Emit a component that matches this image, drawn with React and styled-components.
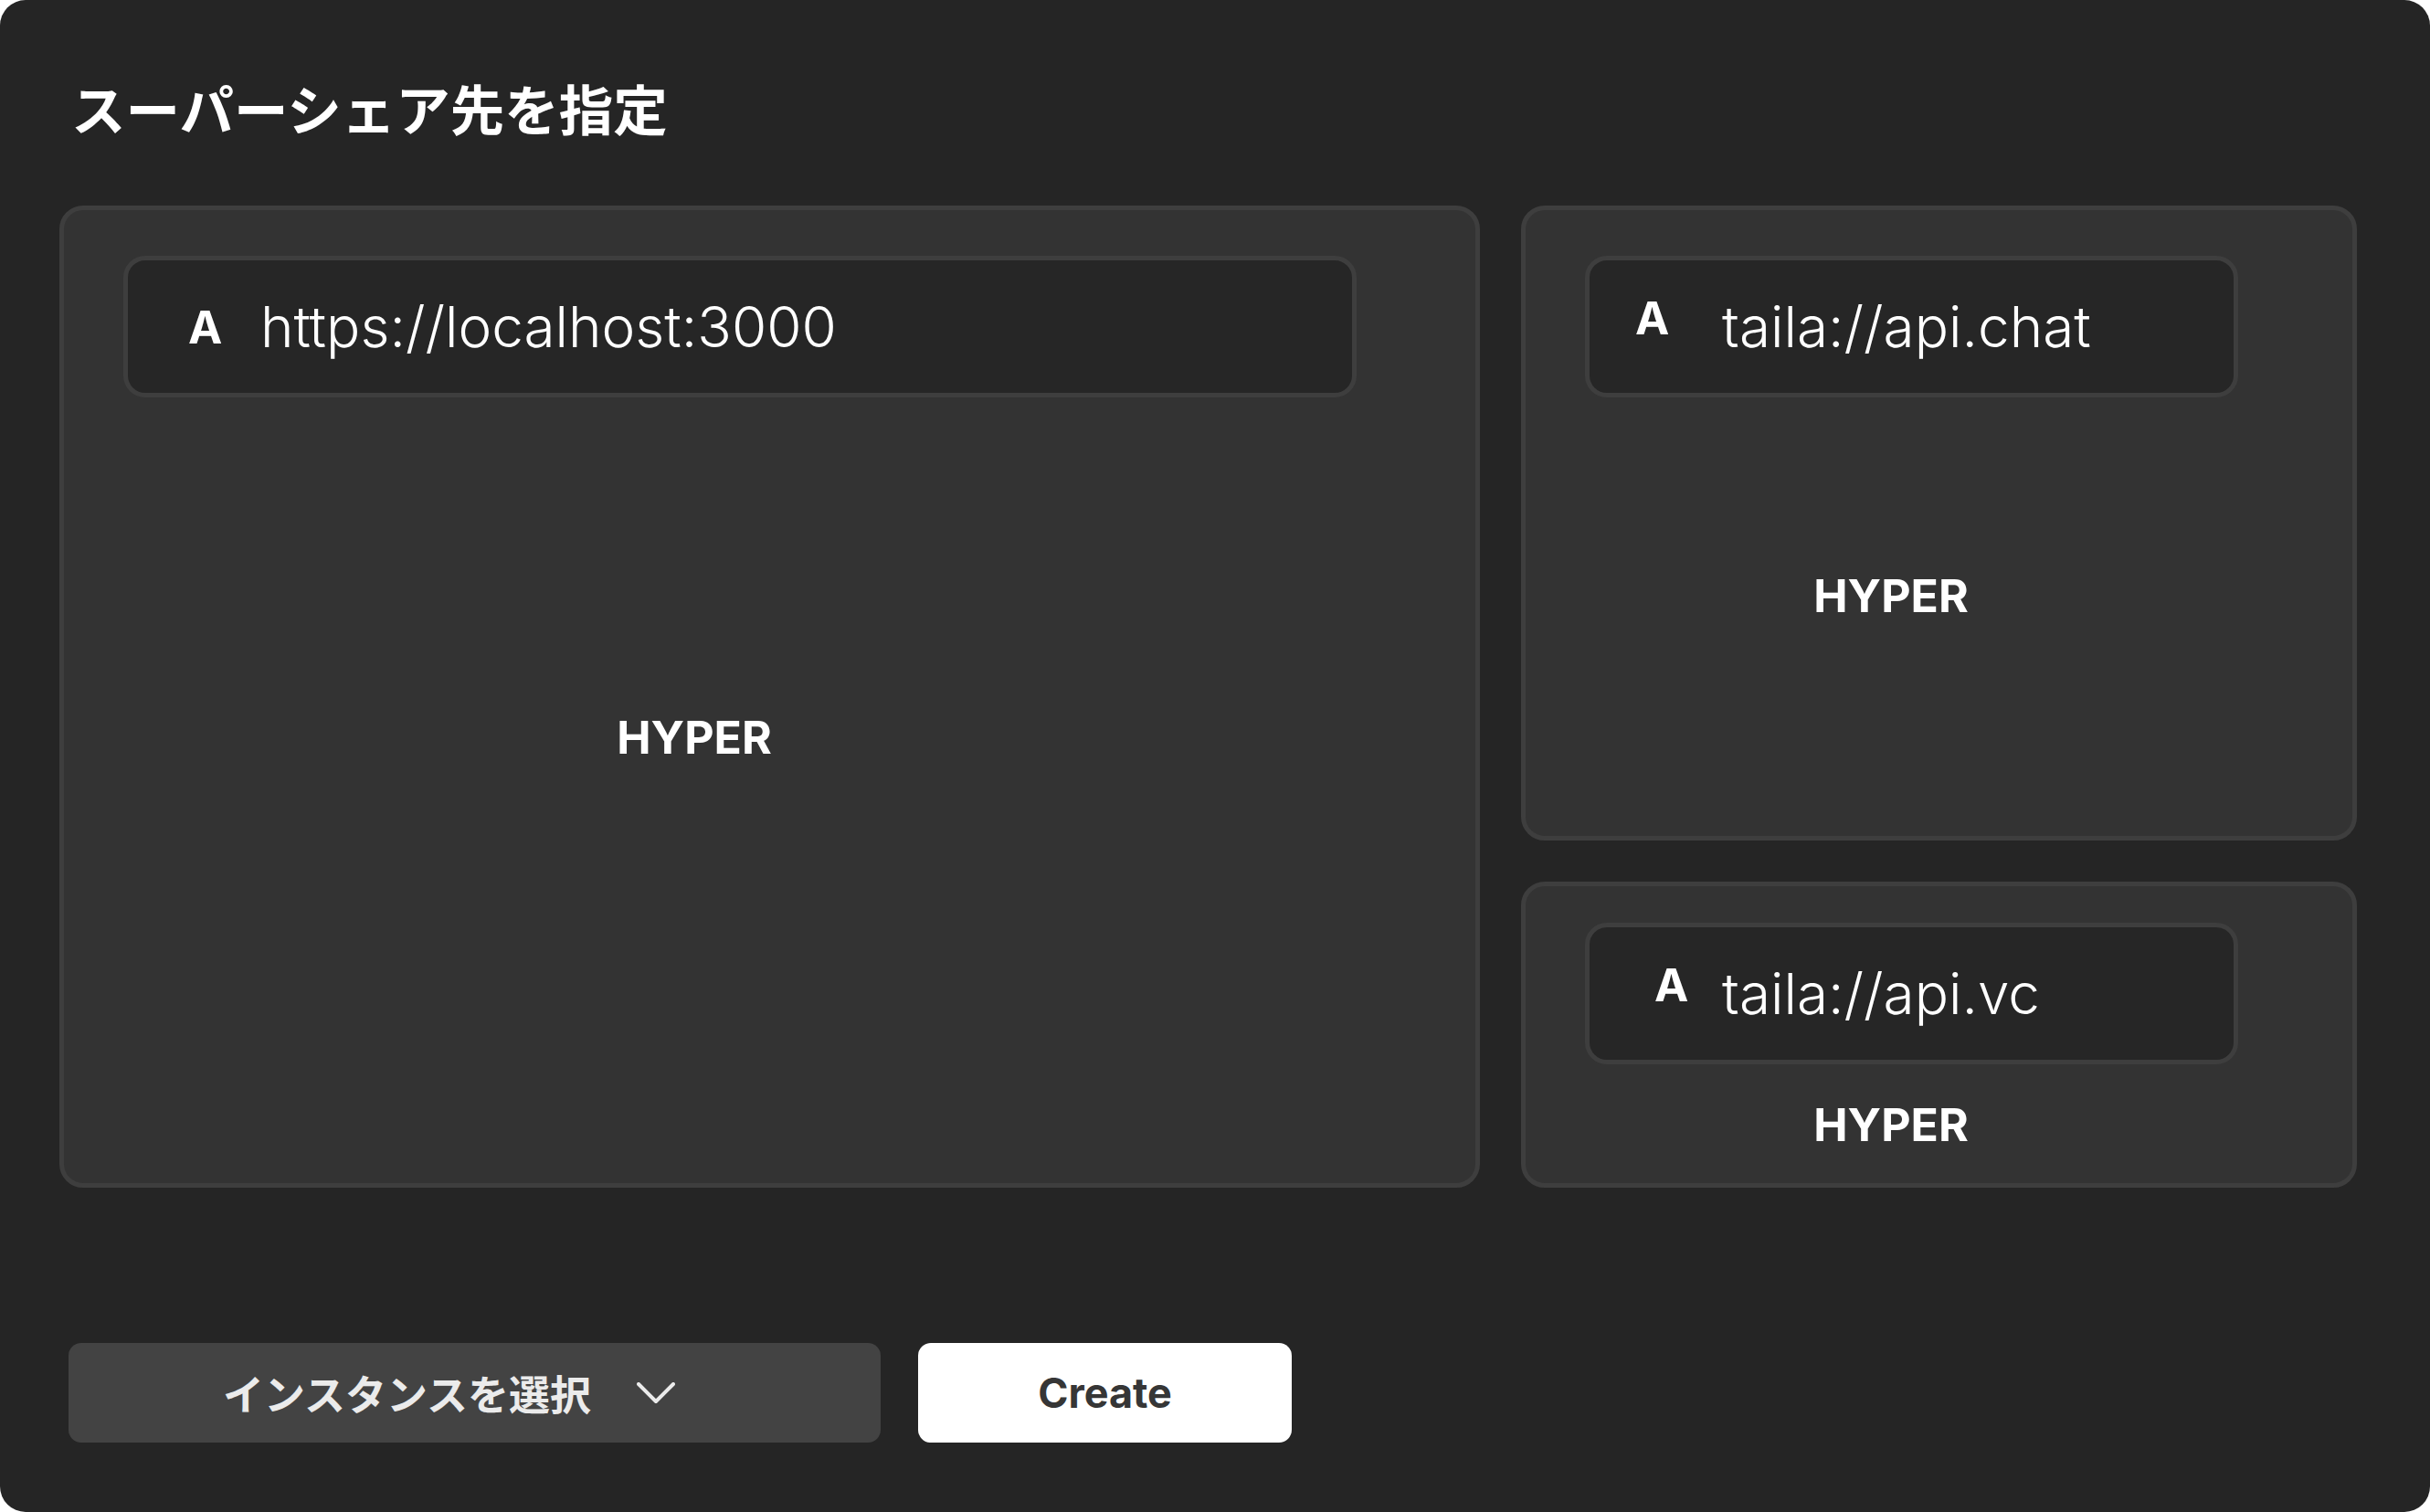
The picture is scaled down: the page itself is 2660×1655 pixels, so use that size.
import React from 'react';
import styled, { createGlobalStyle } from 'styled-components';

const GlobalStyle = createGlobalStyle`
  html, body {
    margin: 0;
    padding: 0;
    background: #ffffff;
  }
  * {
    box-sizing: border-box;
  }
`;

const LATIN = `Inter, "Noto Sans", sans-serif`;
const CJK = `"Noto Sans CJK JP", "Noto Sans", sans-serif`;

const Panel = styled.div`
  width: 2660px;
  height: 1655px;
  background: #252525;
  border-radius: 28px;
  padding: 82px 80px 0 65px;
  display: flex;
  flex-direction: column;
`;

const Title = styled.h1`
  margin: 0 0 73px 13px;
  font-family: ${CJK};
  font-size: 59.5px;
  line-height: 70px;
  font-weight: 700;
  color: #ffffff;
`;

const Board = styled.div`
  display: grid;
  grid-template-columns: 1555px 915px;
  column-gap: 45px;
  height: 1075px;
`;

const Column = styled.div`
  display: grid;
  grid-template-rows: 695px 1fr;
  row-gap: 45px;
`;

const Card = styled.div`
  background: #333333;
  border: 5px solid #3e3e3e;
  border-radius: 26px;
  padding: 50px ${({ $right }) => $right}px 0 65px;
  display: flex;
  flex-direction: column;
  ${({ $tight }) => $tight && 'padding-top: 40px;'}
`;

const UrlField = styled.div`
  height: 155px;
  background: #262626;
  border: 5px solid #3e3e3e;
  border-radius: 24px;
  display: flex;
  align-items: center;
`;

const Badge = styled.span`
  width: 145px;
  flex: none;
  padding-left: ${({ $left }) => $left}px;
  margin-bottom: ${({ $lift }) => $lift * 2}px;
  font-family: ${LATIN};
  font-size: 50px;
  line-height: 1;
  font-weight: 700;
  color: #ffffff;
`;

const Url = styled.span`
  font-family: ${LATIN};
  font-size: 62px;
  line-height: 1;
  font-weight: 300;
  color: #ffffff;
  white-space: nowrap;
`;

const Label = styled.div`
  margin-top: ${({ $top }) => $top}px;
  padding-right: ${({ $shift }) => $shift}px;
  text-align: center;
  font-family: ${LATIN};
  font-size: 50px;
  line-height: 60px;
  font-weight: 700;
  color: #ffffff;
`;

const Actions = styled.div`
  display: flex;
  gap: 41px;
  margin-top: 170px;
  padding-left: 10px;
`;

const SelectButton = styled.button`
  width: 889px;
  height: 109px;
  border: none;
  border-radius: 14px;
  background: #434343;
  color: #ebebeb;
  display: flex;
  align-items: center;
  justify-content: center;
  gap: 50px;
  padding: 0 56px 0 0;
  font-family: ${CJK};
  font-size: 45px;
  font-weight: 700;
  cursor: pointer;
`;

const CreateButton = styled.button`
  width: 409px;
  height: 109px;
  border: none;
  border-radius: 14px;
  background: #ffffff;
  color: #363636;
  font-family: ${LATIN};
  font-size: 45px;
  font-weight: 700;
  cursor: pointer;
`;

function Chevron() {
  return (
    <svg width="42" height="24" viewBox="0 0 42 24" fill="none">
      <polyline
        points="2,2 21,21 40,2"
        stroke="#ebebeb"
        strokeWidth="4"
        strokeLinecap="round"
        strokeLinejoin="round"
      />
    </svg>
  );
}

function Target({ url, left, lift = 0, right, labelTop, labelShift, tight }) {
  return (
    <Card $tight={tight} $right={right}>
      <UrlField>
        <Badge $left={left} $lift={lift}>
          A
        </Badge>
        <Url>{url}</Url>
      </UrlField>
      <Label $top={labelTop} $shift={labelShift}>
        HYPER
      </Label>
    </Card>
  );
}

export default function App() {
  return (
    <>
      <GlobalStyle />
      <Panel>
        <Title>スーパーシェア先を指定</Title>
        <Board>
          <Target
            url="https://localhost:3000"
            left={66}
            right={130}
            labelTop={342}
            labelShift={100}
          />
          <Column>
            <Target
              url="taila://api.chat"
              left={50}
              lift={10}
              right={125}
              labelTop={187}
              labelShift={45}
            />
            <Target
              url="taila://api.vc"
              left={71}
              lift={10}
              right={125}
              labelTop={36}
              labelShift={45}
              tight
            />
          </Column>
        </Board>
        <Actions>
          <SelectButton>
            インスタンスを選択
            <Chevron />
          </SelectButton>
          <CreateButton>Create</CreateButton>
        </Actions>
      </Panel>
    </>
  );
}
